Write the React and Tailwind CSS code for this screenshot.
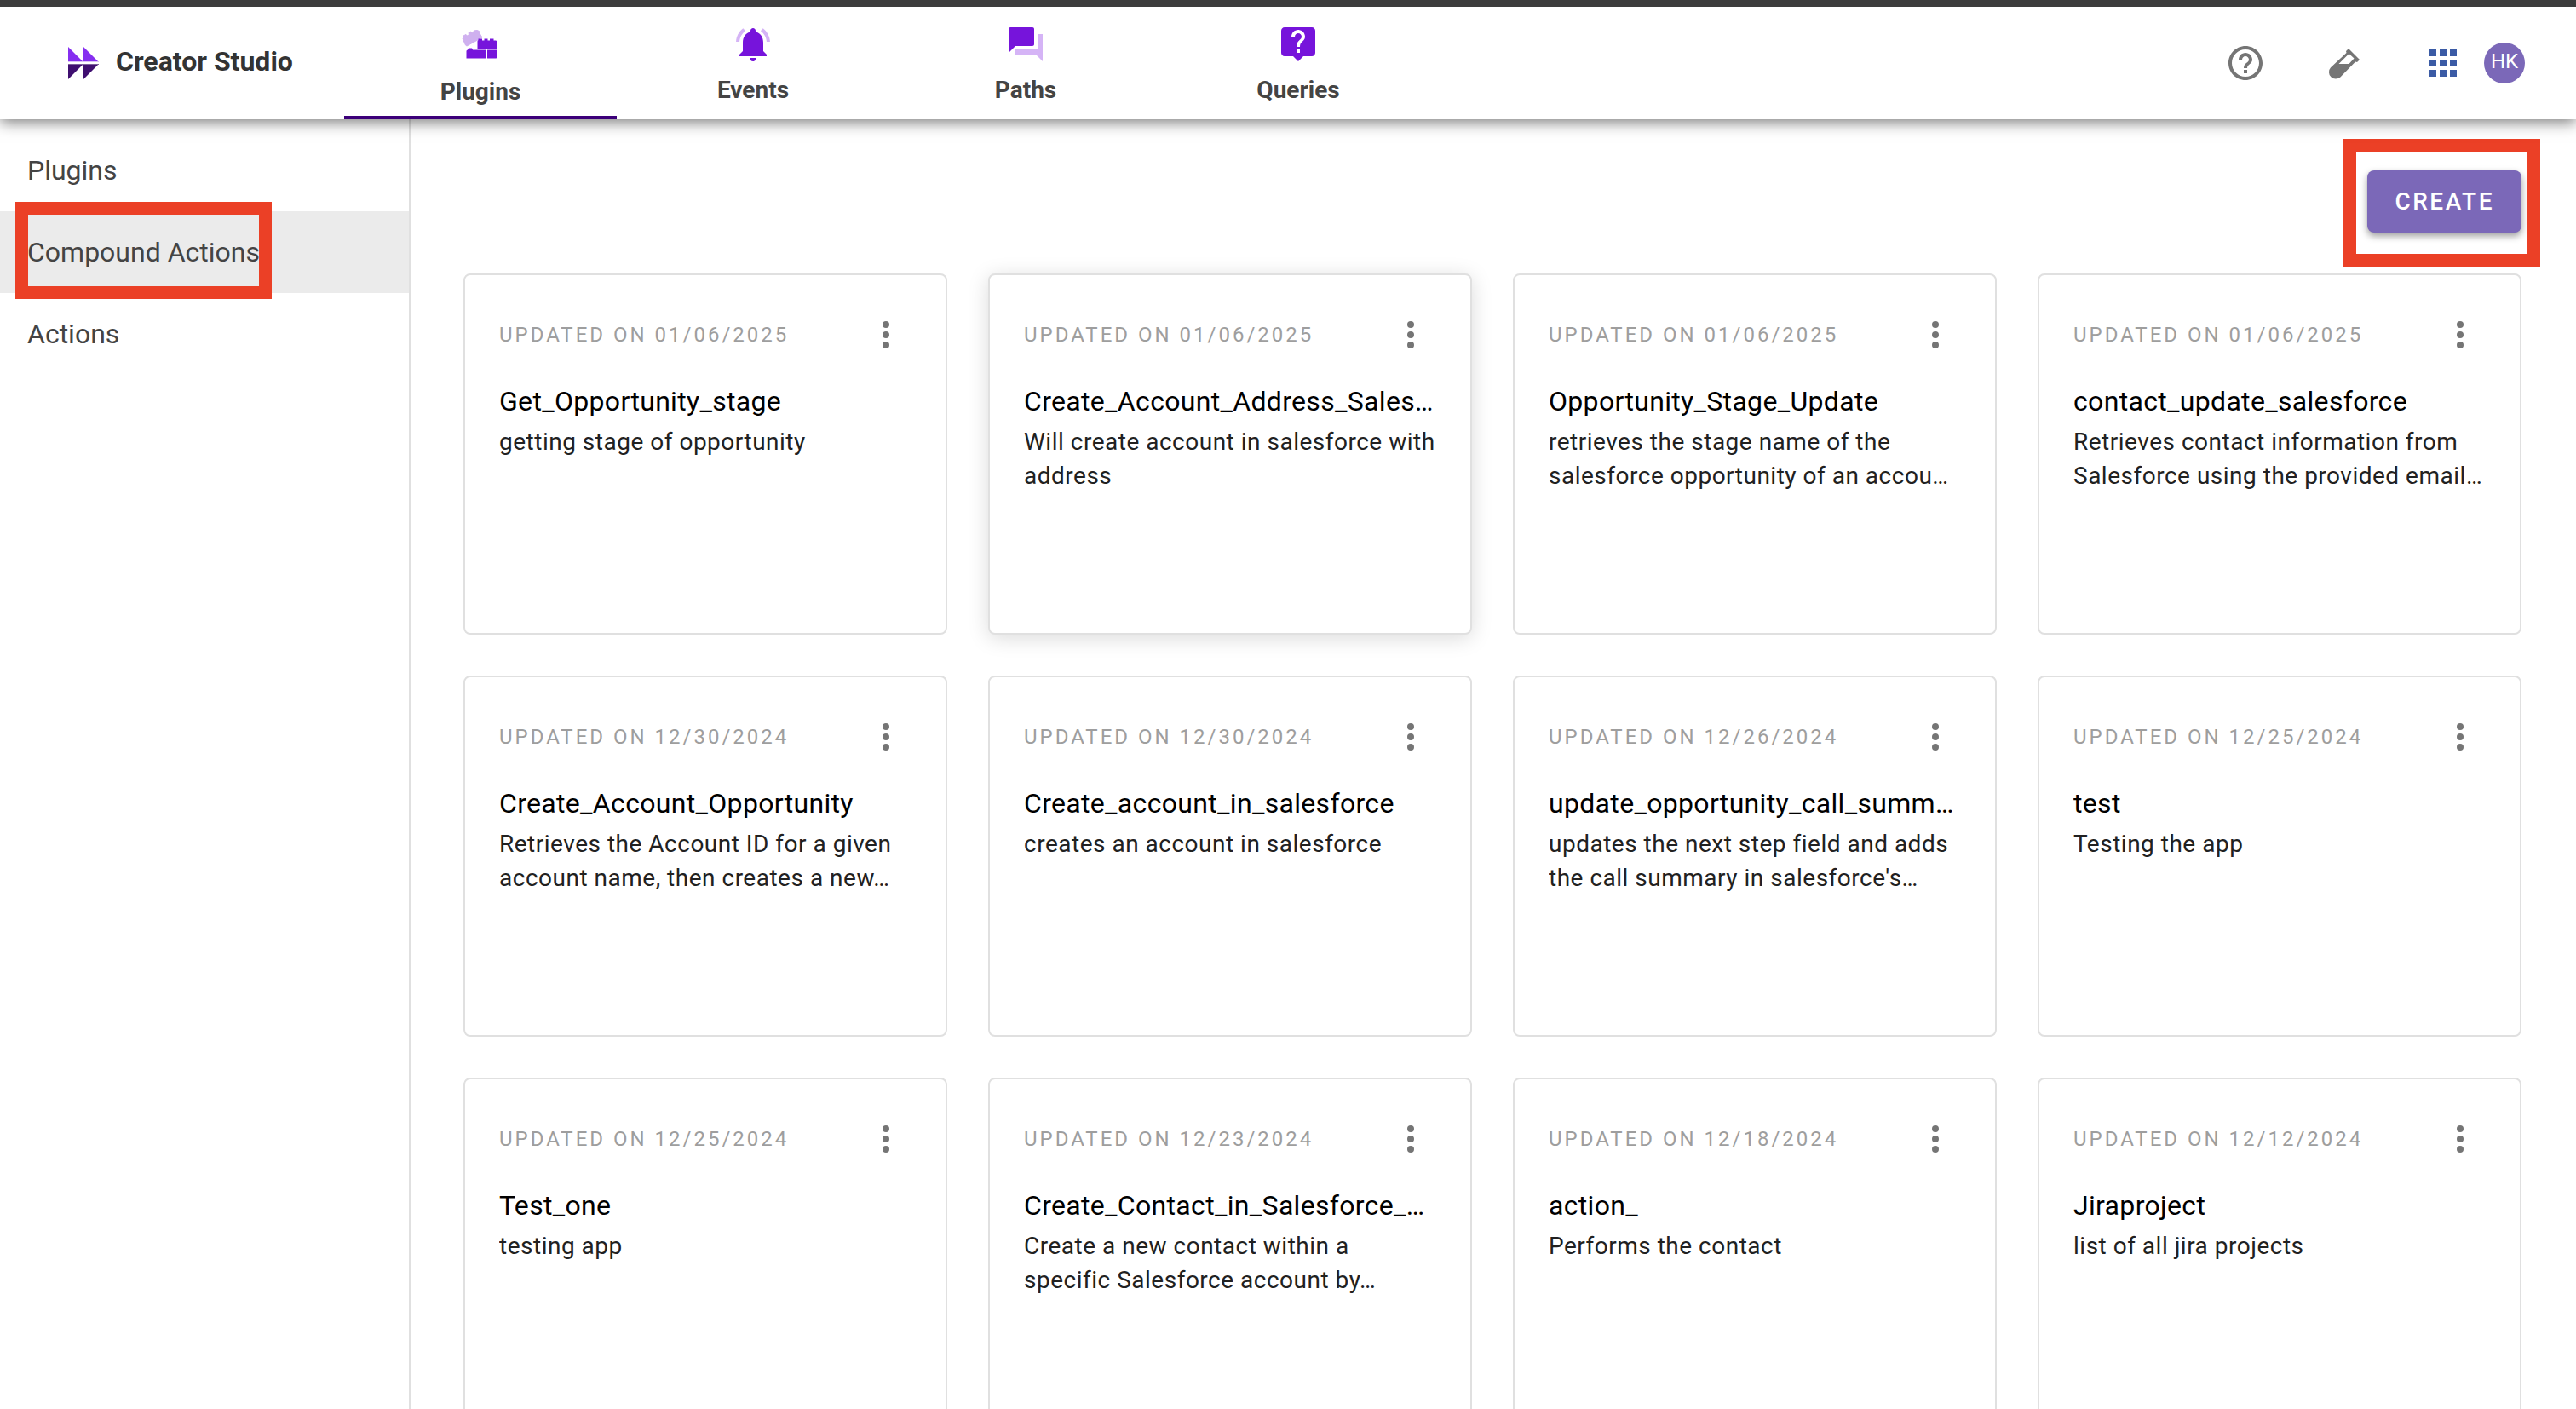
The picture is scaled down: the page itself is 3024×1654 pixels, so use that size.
import React from 'react';

const tabs = [
  { label: 'Plugins', icon: PluginsIcon, active: true },
  { label: 'Events', icon: EventsIcon },
  { label: 'Paths', icon: PathsIcon },
  { label: 'Queries', icon: QueriesIcon },
];

const sections = [
  { label: 'Plugins' },
  { label: 'Compound Actions', active: true, outlined: true },
  { label: 'Actions' },
];

const cards = [
  { date: '01/06/2025', title: 'Get_Opportunity_stage', text: 'getting stage of opportunity' },
  { date: '01/06/2025', title: 'Create_Account_Address_Sales…', text: 'Will create account in salesforce with address', raised: true },
  { date: '01/06/2025', title: 'Opportunity_Stage_Update', text: 'retrieves the stage name of the salesforce opportunity of an accou…' },
  { date: '01/06/2025', title: 'contact_update_salesforce', text: 'Retrieves contact information from Salesforce using the provided email…' },
  { date: '12/30/2024', title: 'Create_Account_Opportunity', text: 'Retrieves the Account ID for a given account name, then creates a new…' },
  { date: '12/30/2024', title: 'Create_account_in_salesforce', text: 'creates an account in salesforce' },
  { date: '12/26/2024', title: 'update_opportunity_call_summ…', text: "updates the next step field and adds the call summary in salesforce's…" },
  { date: '12/25/2024', title: 'test', text: 'Testing the app' },
  { date: '12/25/2024', title: 'Test_one', text: 'testing app' },
  { date: '12/23/2024', title: 'Create_Contact_in_Salesforce_…', text: 'Create a new contact within a specific Salesforce account by…' },
  { date: '12/18/2024', title: 'action_', text: 'Performs the contact' },
  { date: '12/12/2024', title: 'Jiraproject', text: 'list of all jira projects' },
];

function Logo() {
  return (
    <svg viewBox="0 0 36 38" className="h-[38px] w-9" aria-hidden="true">
      <path d="M0 0 18 18H0zM18 0 36 18H18z" fill="#862ff0" />
      <path d="M0 20H18L0 38zM18 20H36L18 38z" fill="#3f0f70" />
      <path d="M0 17H36V18H0z" fill="#d9c2f7" />
      <path d="M0 20H36V21H0z" fill="#7d5f9d" />
    </svg>
  );
}

function PluginsIcon() {
  return (
    <svg viewBox="0 0 48 48" className="size-12" aria-hidden="true">
      <path
        d="M3 17 4 16 4 14 7 12.500 8.500 14 10.500 12.500 10 10.500 13 9 14.500 10.500 16.500 9.500 16 8 20 7.500 22.500 8.500 23 11 26 16 8 26 6.500 25z"
        fill="#cfb0ef"
        stroke="#cfb0ef"
        strokeLinejoin="round"
      />
      <path d="M20.500 20.500q0-1 1-1.500v-1.500h4.500v2h2.500v-2h4v2h2.500v-2h4.500v2h2.500q1.500 0 1.500 1.500v8.500h-23z" fill="#7614db" />
      <path d="M7.500 32q0-1.500 1.500-1.500l1-2h4l1 2h15.500v10h-23zM32 30.500h11.500v8.500q0 1.500-1.500 1.500H32z" fill="#7614db" />
    </svg>
  );
}

function EventsIcon() {
  return (
    <svg viewBox="0 0 24 24" className="size-12" aria-hidden="true">
      <path d="M7.58 4.08 6.15 2.65C3.75 4.48 2.17 7.3 2.03 10.5h2c.15-2.65 1.51-4.97 3.55-6.42zm12.39 6.42h2c-.15-3.2-1.73-6.02-4.12-7.85l-1.42 1.43c2.02 1.45 3.39 3.77 3.54 6.42z" fill="#d5b4f6" />
      <path d="M18 11c0-3.07-1.64-5.64-4.5-6.32V4c0-.83-.67-1.5-1.5-1.5s-1.5.67-1.5 1.5v.68C7.63 5.36 6 7.92 6 11v5l-2 2v1h16v-1l-2-2v-5zm-6 11c.14 0 .27-.01.4-.04.65-.14 1.18-.58 1.44-1.18.1-.24.15-.5.15-.78h-4c.01 1.1.9 2 2.01 2z" fill="#7614db" />
    </svg>
  );
}

function PathsIcon() {
  return (
    <svg viewBox="0 0 24 24" className="size-12" aria-hidden="true">
      <path d="M22 6h-3v9H6v3h12l4 4z" fill="#d5b4f6" />
      <path d="M17 12V3c0-.55-.45-1-1-1H3c-.55 0-1 .45-1 1v14l4-4h10c.55 0 1-.45 1-1z" fill="#7614db" />
    </svg>
  );
}

function QueriesIcon() {
  return (
    <svg viewBox="0 0 24 24" className="size-12" aria-hidden="true">
      <path d="M20 2H4c-1.100 0-2 .9-2 2v13c0 1.100.9 2 2 2h5l3 3 3-3h5c1.100 0 2-.9 2-2V4c0-1.100-.9-2-2-2zm-7 15h-2v-2h2v2zm2.070-7.250-.9.920C13.450 11.400 13 12 13 13.500h-2v-.5c0-1.100.45-2.100 1.170-2.830l1.240-1.260c.37-.36.59-.86.59-1.410 0-1.100-.9-2-2-2s-2 .9-2 2H8c0-2.210 1.790-4 4-4s4 1.790 4 4c0 .88-.36 1.680-.93 2.250z" fill="#7614db" />
    </svg>
  );
}

function HelpIcon() {
  return (
    <svg viewBox="0 0 24 24" className="size-12" aria-hidden="true">
      <path d="M11 18h2v-2h-2v2zm1-16C6.480 2 2 6.480 2 12s4.480 10 10 10 10-4.480 10-10S17.520 2 12 2zm0 18c-4.410 0-8-3.590-8-8s3.590-8 8-8 8 3.590 8 8-3.590 8-8 8zm0-14c-2.210 0-4 1.790-4 4h2c0-1.100.9-2 2-2s2 .9 2 2c0 2-3 1.750-3 5h2c0-2.250 3-2.500 3-5 0-2.210-1.790-4-4-4z" fill="#757575" />
    </svg>
  );
}

function TubeIcon() {
  return (
    <svg viewBox="0 0 48 48" className="size-12" aria-hidden="true">
      <path
        fillRule="evenodd"
        d="M29 7 42 20 39 23 37 22.500 19.400 40.500A8 8 0 0 1 8 29.300L26.500 12 26 10zM17.500 25H29.500L35.500 18.500 29.500 13z"
        fill="#757575"
      />
    </svg>
  );
}

function AppsIcon() {
  return (
    <svg viewBox="0 0 24 24" className="size-12" aria-hidden="true">
      <path d="M4 8h4V4H4v4zm6 12h4v-4h-4v4zm-6 0h4v-4H4v4zm0-6h4v-4H4v4zm6 0h4v-4h-4v4zm6-10v4h4V4h-4zm-6 4h4V4h-4v4zm6 6h4v-4h-4v4zm0 6h4v-4h-4v4z" fill="#3b5ba5" />
    </svg>
  );
}

function MoreIcon() {
  return (
    <svg viewBox="0 0 24 24" className="size-12" aria-hidden="true">
      <circle cx="12" cy="6" r="2" fill="#757575" />
      <circle cx="12" cy="12" r="2" fill="#757575" />
      <circle cx="12" cy="18" r="2" fill="#757575" />
    </svg>
  );
}

function Header() {
  return (
    <header className="relative z-10 flex h-[140px] shrink-0 items-stretch border-t-8 border-[#3c3c3c] bg-white shadow-[0_4px_16px_rgba(0,0,0,0.5)]">
      <a href="#home" className="flex w-[404px] items-center gap-5 pl-20 text-[32px] font-bold leading-10 text-[#333]">
        <Logo />
        <span className="pb-1">Creator Studio</span>
      </a>
      <nav className="flex">
        {tabs.map(({ label, icon: Icon, active }) => (
          <a
            key={label}
            href={'#' + label.toLowerCase()}
            className={
              active
                ? 'flex w-80 flex-col items-center gap-3 border-b-4 border-[#3c0079] pt-5 text-[28px] font-bold leading-10 text-[#444]'
                : 'flex w-80 flex-col items-center gap-2.5 pt-5 text-[28px] font-bold leading-10 text-[#444]'
            }
          >
            <Icon />
            {label}
          </a>
        ))}
      </nav>
      <div className="ml-auto flex items-center pr-15">
        <button type="button" aria-label="Help" className="mr-17">
          <HelpIcon />
        </button>
        <button type="button" aria-label="Labs" className="mr-17">
          <TubeIcon />
        </button>
        <button type="button" aria-label="Apps" className="mr-6">
          <AppsIcon />
        </button>
        <button type="button" className="size-12 rounded-full bg-[#7b68b8] pb-1 text-2xl text-white">
          HK
        </button>
      </div>
    </header>
  );
}

function Sidebar() {
  return (
    <nav className="w-[482px] shrink-0 border-r-2 border-[#e0e0e0] pt-3">
      {sections.map(({ label, active, outlined }) => (
        <a
          key={label}
          href="#section"
          className={
            active
              ? 'flex h-24 items-center bg-[#ebebeb] pl-8 text-[32px] text-[#444]'
              : 'flex h-24 items-center pl-8 text-[32px] text-[#444]'
          }
        >
          <span className="relative">
            {label}
            {outlined && <span className="absolute -inset-x-[14px] -bottom-[31px] -top-[35px] border-[15px] border-[#eb4026]" />}
          </span>
        </a>
      ))}
    </nav>
  );
}

function Card({ date, title, text, raised }) {
  return (
    <article
      className={
        raised
          ? 'h-[424px] min-w-0 rounded-lg border-2 border-[#e0e0e0] bg-white px-10 pt-[46px] shadow-[0_4px_24px_rgba(0,0,0,0.15)]'
          : 'h-[424px] min-w-0 rounded-lg border-2 border-[#e0e0e0] bg-white px-10 pt-[46px]'
      }
    >
      <div className="flex items-center justify-between pr-1.5">
        <p className="text-2xl uppercase tracking-[3px] text-[#9e9e9e]">Updated on {date}</p>
        <button type="button" aria-label="More options">
          <MoreIcon />
        </button>
      </div>
      <h2 className="mt-7.5 truncate text-[32px] leading-12 tracking-[0.01em] text-black">{title}</h2>
      <p className="mt-1 line-clamp-2 text-[28px] leading-10 tracking-[0.018em] text-[#212121]">{text}</p>
    </article>
  );
}

export default function App() {
  return (
    <div className="flex h-screen flex-col overflow-hidden bg-white font-[Roboto,sans-serif]">
      <Header />
      <div className="flex min-h-0 flex-1">
        <Sidebar />
        <main className="min-w-0 flex-1 pl-[62px] pr-16 pt-15">
          <div className="flex justify-end pb-12">
            <div className="relative">
              <button type="button" className="block h-[73px] rounded-lg bg-[#7b68b8] px-8 text-[28px] font-medium tracking-[0.09em] text-white shadow-[0_4px_8px_rgba(0,0,0,0.4)]">
                CREATE
              </button>
              <span className="pointer-events-none absolute -bottom-10 -left-7 -right-[22px] -top-[37px] border-[15px] border-[#eb4026]" />
            </div>
          </div>
          <div className="grid grid-cols-4 gap-12">
            {cards.map((card) => (
              <Card key={card.title} {...card} />
            ))}
          </div>
        </main>
      </div>
    </div>
  );
}
